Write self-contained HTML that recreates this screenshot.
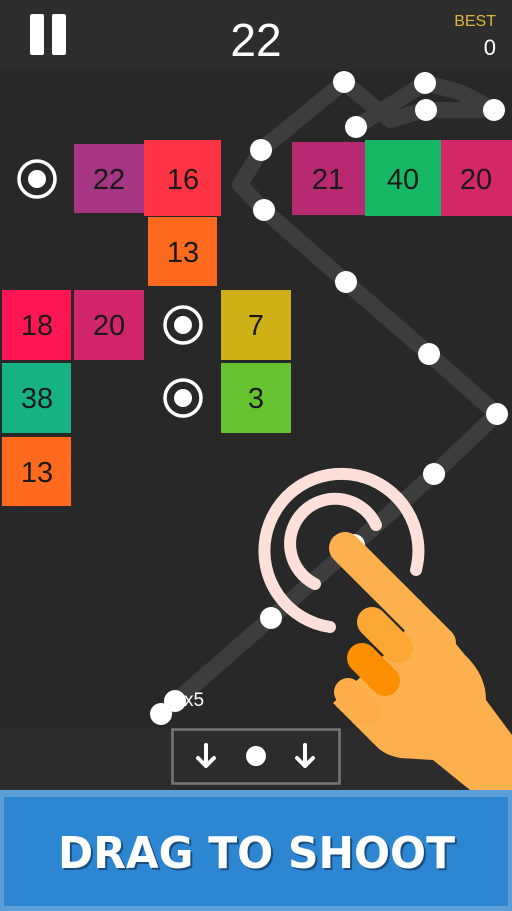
<!DOCTYPE html>
<html><head><style>
html,body{margin:0;padding:0;width:512px;height:911px;overflow:hidden;background:#282828;font-family:"Liberation Sans",sans-serif}
</style></head><body>
<svg width="512" height="911" viewBox="0 0 512 911" xmlns="http://www.w3.org/2000/svg" style="position:absolute;left:0;top:0">
<rect width="512" height="911" fill="#282828"/>
<rect width="512" height="69" fill="#2d2d2d"/>
<rect y="728" width="512" height="62" fill="#2c2c2c"/>
<rect x="30" y="14" width="14" height="41" rx="2" fill="#fff"/>
<rect x="52" y="14" width="14" height="41" rx="2" fill="#fff"/>
<text x="256" y="56" font-size="46" fill="#fff" text-anchor="middle">22</text>
<text x="496" y="26" font-size="16" fill="#e0b33a" text-anchor="end">BEST</text>
<text x="496" y="55" font-size="22" fill="#fff" text-anchor="end">0</text>
<g stroke="#fff" stroke-opacity="0.1" stroke-width="16" fill="none" stroke-linecap="round" stroke-linejoin="round">
<polyline points="161,714 271,618 354,545 434,474 497,414 429,354 346,282 264,210 240,185 261,150 344,82 390,120 425,110 494,110 460,92 425,83 356,127"/>
</g>
<g font-size="29" text-anchor="middle" fill="#1a1a1a">
<rect x="74" y="144" width="70" height="69" fill="#a63584"/><text x="109" y="189">22</text>
<rect x="144" y="140" width="77" height="76" fill="#ff3344"/><text x="183" y="189">16</text>
<rect x="148" y="217" width="69" height="69" fill="#ff6a1e"/><text x="183" y="262">13</text>
<rect x="292" y="142" width="73" height="73" fill="#b72a72"/><text x="328" y="189">21</text>
<rect x="365" y="140" width="76" height="76" fill="#17b865"/><text x="403" y="189">40</text>
<rect x="441" y="140" width="71" height="76" fill="#d32768"/><text x="476" y="189">20</text>
<rect x="2" y="290" width="69" height="70" fill="#fd1653"/><text x="37" y="335">18</text>
<rect x="74" y="290" width="70" height="70" fill="#d0246b"/><text x="109" y="335">20</text>
<rect x="221" y="290" width="70" height="70" fill="#ceb116"/><text x="256" y="335">7</text>
<rect x="2" y="363" width="69" height="70" fill="#15b283"/><text x="37" y="408">38</text>
<rect x="221" y="363" width="70" height="70" fill="#66c22e"/><text x="256" y="408">3</text>
<rect x="2" y="437" width="69" height="69" fill="#ff6a1e"/><text x="37" y="482">13</text>
</g>
<g fill="none" stroke="#fff" stroke-width="3.5">
<circle cx="37" cy="179" r="18"/><circle cx="183" cy="325" r="18"/><circle cx="183" cy="398" r="18"/>
</g>
<g fill="#fff">
<circle cx="37" cy="179" r="9"/><circle cx="183" cy="325" r="9"/><circle cx="183" cy="398" r="9"/>
<circle cx="344" cy="82" r="11"/><circle cx="425" cy="83" r="11"/><circle cx="426" cy="110" r="11"/><circle cx="494" cy="110" r="11"/><circle cx="356" cy="127" r="11"/>
<circle cx="261" cy="150" r="11"/><circle cx="264" cy="210" r="11"/><circle cx="346" cy="282" r="11"/><circle cx="429" cy="354" r="11"/><circle cx="497" cy="414" r="11"/><circle cx="434" cy="474" r="11"/><circle cx="354" cy="545" r="11"/><circle cx="271" cy="618" r="11"/>
<circle cx="175" cy="701" r="11"/><circle cx="161" cy="714" r="11"/>
</g>
<text x="184" y="706" font-size="19" fill="#fff">x5</text>
<g fill="none" stroke="#fde0da" stroke-width="12" stroke-linecap="round">
<path d="M330,627 A77,77 0 1 1 416,570"/>
<path d="M315,584 A45,45 0 1 1 376,525"/>
</g>
<!-- hand -->
<path d="M420,600 L465,655 Q486,675 486,700 L512,735 L512,790 L470,790 L433,760 L400,758 Q385,755 377,747 L333,703 L400,640 Z" fill="#fdb04d"/>
<line x1="345" y1="548" x2="440" y2="643" stroke="#fdb04d" stroke-width="32" stroke-linecap="round"/>
<line x1="372" y1="622" x2="398" y2="648" stroke="#fca733" stroke-width="30" stroke-linecap="round"/>
<line x1="362" y1="658" x2="385" y2="681" stroke="#fb8f00" stroke-width="30" stroke-linecap="round"/>
<line x1="348" y1="692" x2="368" y2="712" stroke="#fdae4a" stroke-width="28" stroke-linecap="round"/>
<path d="M407,653 L387,673 L365,652 L395,640 Z" fill="#fca733" opacity="0"/>
<rect x="172.5" y="729.5" width="167" height="54" fill="none" stroke="#777" stroke-width="2.5"/>
<circle cx="256" cy="756" r="10" fill="#fff"/>
<g stroke="#fff" stroke-width="4" fill="none" stroke-linecap="round" stroke-linejoin="round">
<path d="M206,745 V766 M198,758 L206,766 L214,758"/>
<path d="M305,745 V766 M297,758 L305,766 L313,758"/>
</g>
<rect y="790" width="512" height="121" fill="#5b9fd8"/>
<rect x="4" y="797" width="504" height="109" fill="#2d86d1"/>
<text x="60" y="870" font-size="44" font-weight="bold" font-family="DejaVu Sans, sans-serif" fill="#0a2a4a" opacity="0.6" textLength="397" lengthAdjust="spacingAndGlyphs">DRAG TO SHOOT</text>
<text x="58" y="868" font-size="44" font-weight="bold" font-family="DejaVu Sans, sans-serif" fill="#fff" textLength="397" lengthAdjust="spacingAndGlyphs">DRAG TO SHOOT</text>
</svg>
</body></html>
